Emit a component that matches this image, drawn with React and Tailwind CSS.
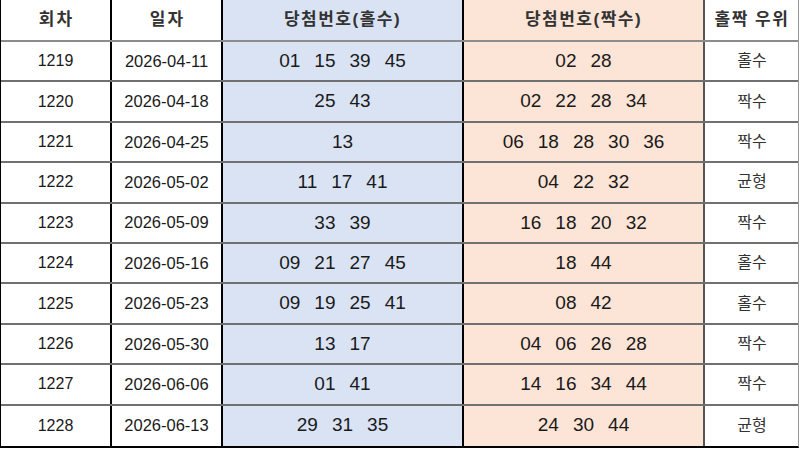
const rows = [
  ["1219", "2026-04-11", ["01", "15", "39", "45"], ["02", "28"], "홀수"],
  ["1220", "2026-04-18", ["25", "43"], ["02", "22", "28", "34"], "짝수"],
  ["1221", "2026-04-25", ["13"], ["06", "18", "28", "30", "36"], "짝수"],
  ["1222", "2026-05-02", ["11", "17", "41"], ["04", "22", "32"], "균형"],
  ["1223", "2026-05-09", ["33", "39"], ["16", "18", "20", "32"], "짝수"],
  ["1224", "2026-05-16", ["09", "21", "27", "45"], ["18", "44"], "홀수"],
  ["1225", "2026-05-23", ["09", "19", "25", "41"], ["08", "42"], "홀수"],
  ["1226", "2026-05-30", ["13", "17"], ["04", "06", "26", "28"], "짝수"],
  ["1227", "2026-06-06", ["01", "41"], ["14", "16", "34", "44"], "짝수"],
  ["1228", "2026-06-13", ["29", "31", "35"], ["24", "30", "44"], "균형"],
];

const grid = "grid grid-cols-[111px_111px_241px_241px_94px]";
const kr = { fontFamily: '"Liberation Sans", "Noto Sans CJK KR", sans-serif' };

function Nums({ list }) {
  return (
    <div className="flex gap-[14px] justify-center">
      {list.map((n, i) => (
        <span key={i}>{n}</span>
      ))}
    </div>
  );
}

export default function App() {
  return (
    <div className="w-[800px] h-[450px] bg-white overflow-hidden text-[#1a1a1a]" style={kr}>
      <div className="w-[799px] border-l border-black border-b-2 border-b-black border-r border-r-[#999]">
        <div className={`${grid} h-[42px] border-b-2 border-[#8c8c8c] font-bold text-[17px] text-[#333]`}>
          <div className="flex items-center justify-center border-r-2 border-black tracking-[2px] pl-[2px]">회차</div>
          <div className="flex items-center justify-center border-r-2 border-black tracking-[2px] pl-[2px]">일자</div>
          <div className="flex items-center justify-center border-r-2 border-black bg-[#dae3f3] tracking-[1.5px]">당첨번호(홀수)</div>
          <div className="flex items-center justify-center border-r-2 border-[#555] bg-[#fce4d6] tracking-[1.5px]">당첨번호(짝수)</div>
          <div className="flex items-center justify-center tracking-[1.5px]">홀짝 우위</div>
        </div>
        {rows.map((r, i) => (
          <div
            key={r[0]}
            className={`${grid} h-[40.4px] ${i < rows.length - 1 ? "border-b-2 border-[#707070]" : ""}`}
          >
            <div className="flex items-center justify-center border-r-2 border-black text-[16px]">{r[0]}</div>
            <div className="flex items-center justify-center border-r-2 border-black text-[16.5px]">{r[1]}</div>
            <div className="flex items-center justify-center border-r-2 border-black bg-[#dae3f3] text-[19px]">
              <Nums list={r[2]} />
            </div>
            <div className="flex items-center justify-center border-r-2 border-[#555] bg-[#fce4d6] text-[19px]">
              <Nums list={r[3]} />
            </div>
            <div className="flex items-center justify-center text-[16px] text-[#333]">{r[4]}</div>
          </div>
        ))}
      </div>
    </div>
  );
}
